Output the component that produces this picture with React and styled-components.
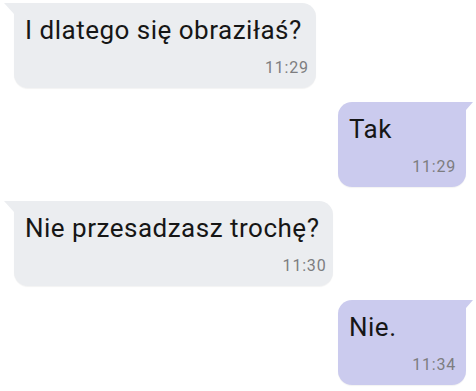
import React from 'react';
import styled, { createGlobalStyle, css } from 'styled-components';

const GlobalStyle = createGlobalStyle`
  html, body {
    margin: 0;
    padding: 0;
    background: #ffffff;
  }
  body {
    font-family: Roboto, "Noto Sans", "Liberation Sans", sans-serif;
    -webkit-font-smoothing: antialiased;
  }
`;

const Thread = styled.div`
  width: 476px;
  height: 391px;
  box-sizing: border-box;
  padding: 3px 10px 0 14px;
  display: flex;
  flex-direction: column;
  gap: 14px;
  overflow: hidden;
`;

const Row = styled.div`
  display: flex;
  justify-content: ${(p) => (p.$out ? 'flex-end' : 'flex-start')};
`;

// Bubble with a small tail at the top corner
const Bubble = styled.div`
  position: relative;
  box-sizing: border-box;
  height: 85px;
  min-width: 128px;
  padding: 12px ${(p) => (p.$out ? '10px' : '7px')} 0 11px;
  display: flex;
  flex-direction: column;
  background: ${(p) => (p.$out ? '#cbcbee' : '#ebedf0')};
  border-radius: ${(p) => (p.$out ? '14px 0 14px 14px' : '0 14px 14px 14px')};
  box-shadow: 0 1px 1px rgba(0, 0, 0, 0.05);

  &::before {
    content: '';
    position: absolute;
    top: 0;
    background: inherit;
    ${(p) =>
      p.$out
        ? css`
            right: -7px;
            width: 7px;
            height: 8px;
            clip-path: polygon(0 0, 100% 0, 0 100%);
          `
        : css`
            left: -10px;
            width: 10px;
            height: 11px;
            clip-path: polygon(0 0, 100% 0, 100% 100%);
          `}
  }
`;

const Text = styled.div`
  font-size: 26px;
  line-height: 30px;
  letter-spacing: 0.5px;
  color: #161616;
  padding-right: ${(p) => (p.$out ? '0' : '7px')};
  white-space: nowrap;
`;

const Time = styled.div`
  margin-top: 14px;
  align-self: flex-end;
  font-size: 16px;
  line-height: 18px;
  letter-spacing: 0.8px;
  color: #7d7d80;
`;

const messages = [
  { text: 'I dlatego się obraziłaś?', time: '11:29', out: false },
  { text: 'Tak', time: '11:29', out: true },
  { text: 'Nie przesadzasz trochę?', time: '11:30', out: false },
  { text: 'Nie.', time: '11:34', out: true },
];

export default function App() {
  return (
    <>
      <GlobalStyle />
      <Thread>
        {messages.map((m, i) => (
          <Row key={i} $out={m.out}>
            <Bubble $out={m.out}>
              <Text $out={m.out}>{m.text}</Text>
              <Time>{m.time}</Time>
            </Bubble>
          </Row>
        ))}
      </Thread>
    </>
  );
}
